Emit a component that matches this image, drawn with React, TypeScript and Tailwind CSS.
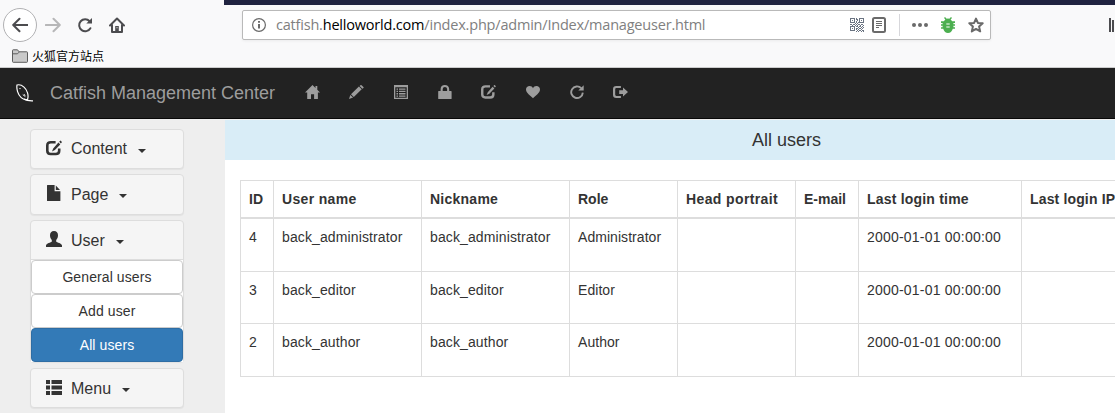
import React from "react";

type GlyphProps = { children: React.ReactNode; size?: string; box?: string };

function Glyph({ children, size = "size-[14px]", box = "0 0 14 14" }: GlyphProps) {
  return (
    <svg viewBox={box} className={`${size} shrink-0 fill-current`}>
      {children}
    </svg>
  );
}

const EditShape = () => (
  <g>
    <path d="M9.6 2.2H4.8Q1.3 2.2 1.3 5.4V10.8Q1.3 14 4.6 14H9.8Q13.2 14 13.2 10.8V8.4" fill="none" stroke="currentColor" strokeWidth="2.6" />
    <path d="M7.2 8.4L12.4 2.6L14.3 4.4L8.9 10L6 11.4ZM13.2 1.8L14.4 .5L16 2L14.9 3.4Z" />
  </g>
);

const navIcons: React.ReactNode[] = [
  <Glyph key="home" size="w-[15px] h-[14px]" box="0 0 15 14">
    <path d="M7.5 0 L10.5 3V1H12.3V4.8L15 7.6H12.9V14H9.1V9.2H6V14H2.2V7.6H0Z" />
  </Glyph>,
  <Glyph key="pencil" size="w-[15px] h-[14px]" box="0 0 15 14">
    <path d="M0 14 L1.3 9.9 L4.1 12.6ZM2 9.2 L9.9 1.6 L12.7 4.3 L4.8 11.9ZM10.6 .9 L11.4 .2 Q12 -.2 12.6 .3 L14.4 2 Q14.9 2.5 14.4 3 L13.4 3.8Z" />
  </Glyph>,
  <Glyph key="list">
    <path fillRule="evenodd" d="M0 0H14V14H0ZM1.3 2.3V12.7H12.7V2.3Z" />
    <path d="M2.5 3.5h1.5v1.3h-1.5zM5 3.5h6.5v1.3H5zM2.5 5.8h1.5v1.3h-1.5zM5 5.8h6.5v1.3H5zM2.5 8.1h1.5v1.3h-1.5zM5 8.1h6.5v1.3H5zM2.5 10.4h1.5v1.3h-1.5zM5 10.4h6.5v1.3H5z" />
  </Glyph>,
  <Glyph key="lock">
    <path fillRule="evenodd" d="M.6 6H2.6V4Q2.8 0 6.8 0T11.2 4V6H13Q13.6 6 13.6 6.6V13.4Q13.6 14 13 14H.8Q.2 14 .2 13.4V6.6Q.2 6 .6 6ZM4.7 6H9.1V4Q9 2.1 6.9 2.1T4.7 4Z" />
  </Glyph>,
  <Glyph key="edit" size="w-[15px] h-[14px]" box="0 .7 16 15">
    <EditShape />
  </Glyph>,
  <Glyph key="heart">
    <path d="M7 13.2C4.5 10.8 0 8 0 4.6C0 2.4 1.6 1 3.6 1C5.2 1 6.4 1.9 7 3.3C7.6 1.9 8.8 1 10.4 1C12.4 1 14 2.4 14 4.6C14 8 9.5 10.8 7 13.2Z" />
  </Glyph>,
  <Glyph key="refresh">
    <path d="M11.2 3.2A5.8 5.8 0 1 0 12.8 7.6" fill="none" stroke="currentColor" strokeWidth="1.9" />
    <path d="M13.7 .2V5.5H8.3Z" />
  </Glyph>,
  <Glyph key="logout" size="w-[15px] h-[14px]" box="0 0 15 14">
    <path d="M8.8 2H4.2Q2 2 2 4.2V9.8Q2 12 4.2 12H8.8" transform="translate(-.9 0)" fill="none" stroke="currentColor" strokeWidth="2.2" />
    <path d="M6.2 5.3H10V2.6L15 7.1L10 11.6V8.9H6.2Z" />
  </Glyph>,
];

const Caret = () => <span className="ml-[11px] mt-[3px] border-x-4 border-t-4 border-x-transparent border-t-[#333]" />;

function PanelHead({ icon, label }: { icon: React.ReactNode; label: string }) {
  return (
    <div className="flex h-full items-center pl-[15px] text-[16px] leading-[18px] text-[#333]">
      <span className="mb-[3px] mr-[9px] flex w-4 justify-center">{icon}</span>
      {label}
      <Caret />
    </div>
  );
}

const panelClass = "w-[154px] shrink-0 rounded-[4px] border border-[#ddd] bg-[#f5f5f5] shadow-[0_1px_1px_rgba(0,0,0,0.05)]";

function Sidebar() {
  return (
    <aside className="flex w-[225px] shrink-0 flex-col bg-[#eee] pl-[30px] pt-[10px]">
      <div className={`${panelClass} h-[40px]`}>
        <PanelHead
          label="Content"
          icon={<Glyph size="size-4" box="0 0 16 16"><EditShape /></Glyph>}
        />
      </div>
      <div className={`${panelClass} mt-[5px] h-[41px]`}>
        <PanelHead
          label="Page"
          icon={
            <Glyph size="size-4" box="0 0 16 16">
              <path d="M1.5 0H8.6V6.2H14.4V15.4Q14.4 16 13.8 16H1.5Q1 16 1 15.4V.6Q1 0 1.5 0ZM9.8 .6L14 5H9.8Z" />
            </Glyph>
          }
        />
      </div>
      <div className={`${panelClass} mt-[5px] flex h-[142px] flex-col`}>
        <div className="h-[39px] shrink-0 border-b border-[#ddd] pt-px">
          <PanelHead
            label="User"
            icon={
              <Glyph size="size-4" box="0 0 16 16">
                <path d="M8 0C10.6 0 12 1.7 12 4.3C12 6.4 11.3 8 10.2 9V10.5C10.8 11.6 16 12.3 16 14.6V16H0V14.6C0 12.3 5.2 11.6 5.8 10.5V9C4.7 8 4 6.4 4 4.3C4 1.7 5.4 0 8 0Z" />
              </Glyph>
            }
          />
        </div>
        <div className="flex flex-col bg-white text-center text-[14px] leading-[32px] tracking-[0.1px] text-[#333]">
          <button className="h-[34px] rounded-[4px] border border-[#ccc] bg-white">General users</button>
          <button className="h-[34px] rounded-[4px] border border-[#ccc] bg-white">Add user</button>
          <button className="h-[34px] rounded-[4px] border border-[#2e6da4] bg-[#337ab7] text-white">All users</button>
        </div>
      </div>
      <div className={`${panelClass} mt-[6px] h-[40px] pt-px`}>
        <PanelHead
          label="Menu"
          icon={
            <Glyph size="size-4" box="0 0 16 16">
              <path d="M0 1h4v4H0zM5.5 1H16v4H5.5zM0 6.5h4v4H0zM5.5 6.5H16v4H5.5zM0 12h4v4H0zM5.5 12H16v4H5.5z" />
            </Glyph>
          }
        />
      </div>
    </aside>
  );
}

const columns = [
  { heading: "ID", width: "w-[33px]", head: "", body: "" },
  { heading: "User name", width: "w-[148px]", head: "tracking-[0.33px]", body: "tracking-[0.12px]" },
  { heading: "Nickname", width: "w-[148px]", head: "tracking-[0.25px]", body: "tracking-[0.12px]" },
  { heading: "Role", width: "w-[108px]", head: "", body: "tracking-[0.05px]" },
  { heading: "Head portrait", width: "w-[118px]", head: "tracking-[0.38px]", body: "" },
  { heading: "E-mail", width: "w-[63px]", head: "", body: "" },
  { heading: "Last login time", width: "w-[163px]", head: "tracking-[0.2px]", body: "tracking-[0.21px]" },
  { heading: "Last login IP", width: "w-[120px]", head: "tracking-[0.15px]", body: "" },
];
const users = [
  { height: "h-[53px]", cells: ["4", "back_administrator", "back_administrator", "Administrator", "", "", "2000-01-01 00:00:00", ""] },
  { height: "h-[52px]", cells: ["3", "back_editor", "back_editor", "Editor", "", "", "2000-01-01 00:00:00", ""] },
  { height: "h-[53px]", cells: ["2", "back_author", "back_author", "Author", "", "", "2000-01-01 00:00:00", ""] },
];

function UserTable() {
  return (
    <table className="ml-[15px] mt-[20px] w-[901px] table-fixed border-separate border-spacing-0 text-left text-[14px] leading-[20px] text-[#333]">
      <colgroup>
        {columns.map((c) => (
          <col key={c.heading} className={c.width} />
        ))}
      </colgroup>
      <thead>
        <tr className="h-[39px]">
          {columns.map((c) => (
            <th key={c.heading} className={`whitespace-nowrap border-b-2 border-l border-t border-[#ddd] p-0 pl-2 font-bold ${c.head}`}>
              {c.heading}
            </th>
          ))}
        </tr>
      </thead>
      <tbody>
        {users.map((u) => (
          <tr key={u.cells[0]} className={u.height}>
            {u.cells.map((c, i) => (
              <td key={i} className={`whitespace-nowrap border-b border-l border-[#ddd] p-0 pl-2 pt-2 align-top ${columns[i].body}`}>
                {c}
              </td>
            ))}
          </tr>
        ))}
      </tbody>
    </table>
  );
}

const qrRows = [
  "11111010011111",
  "10001011010001",
  "10101001010101",
  "10001010010001",
  "11111010111111",
  "00000101000000",
  "11011010110110",
  "00100101001001",
  "11111011011010",
  "10001000100101",
  "10101011011010",
  "10001010100100",
  "11111001011011",
  "00000010100101",
];

function Browser() {
  return (
    <header className="flex h-[68px] flex-col border-b border-[#ccc] bg-[#f9f9fa]">
      <div className="ml-[224px] h-[5px] shrink-0 bg-[#202340]" />
      <div className="flex h-[40px] shrink-0 items-center pl-[3px] text-[#4c4c4f]">
        <span className="flex size-[34px] items-center justify-center rounded-full border border-[#b1b1b3] bg-white">
          <svg viewBox="0 0 16 16" className="size-4 fill-none stroke-current stroke-2">
            <path d="M15.5 8H1.5M7.5 1.7L1.2 8L7.5 14.3" strokeLinecap="round" strokeLinejoin="round" />
          </svg>
        </span>
        <svg viewBox="0 0 16 16" className="ml-[8px] size-4 fill-none stroke-[#b7b7b8] stroke-2">
          <path d="M.8 8H14.5M8.5 1.7L14.8 8L8.5 14.3" strokeLinecap="round" strokeLinejoin="round" />
        </svg>
        <svg viewBox="0 0 16 16" className="ml-[16px] size-4 fill-none stroke-current stroke-2">
          <path d="M12.6 4.2A6 6 0 1 0 13.4 11.2" strokeLinecap="round" />
          <path d="M15 1V6.5H9.3Z" className="fill-current stroke-none" />
        </svg>
        <svg viewBox="0 0 16 16" className="ml-[16px] size-4 fill-none stroke-current stroke-2">
          <path d="M1 8.5L8 1.5L15 8.5M3 8V15H13V8" strokeLinecap="round" strokeLinejoin="round" />
          <path d="M6.2 14.5V9H9.8V14.5Z" className="fill-current stroke-none" />
          <path d="M7.5 10.2h1v1h-1z" className="fill-white stroke-none" />
        </svg>
        <div className="ml-[117px] flex h-[30px] w-[749px] shrink-0 items-center rounded-[2px] border border-[#b9b9b9] bg-white pl-[9px] text-[#6a6a6a] shadow-[0_1px_3px_rgba(0,0,0,0.06)]">
          <svg viewBox="0 0 14 14" className="size-[14px] fill-none stroke-current">
            <circle cx="7" cy="7" r="6.4" strokeWidth="1.2" />
            <path d="M7 6V10.5M7 3V4.8" strokeWidth="2" />
          </svg>
          <span className="ml-[10px] w-[574px] whitespace-nowrap font-['Open_Sans',sans-serif] text-[14.5px] leading-[20px] tracking-[-0.2px] text-[#808080]">
            catfish.<span className="text-black">helloworld.com</span>/index.php/admin/Index/manageuser.html
          </span>
          <svg viewBox="0 0 14 14" shapeRendering="crispEdges" className="size-[14px] shrink-0 fill-[#6b7482]">
            {qrRows.flatMap((row, y) =>
              row.split("").map((v, x) => (v === "1" ? <rect key={`${x}-${y}`} x={x} y={y} width="1" height="1" /> : null)),
            )}
          </svg>
          <svg viewBox="0 0 14 16" className="ml-[8px] h-4 w-[14px] shrink-0 fill-none stroke-current">
            <rect x="1" y="1" width="12" height="14" rx="1.5" strokeWidth="2" />
            <path d="M4 4.5H10M4 6.5H10M4 8.5H10M4 10.5H7" />
          </svg>
          <span className="ml-[13px] h-[22px] w-px shrink-0 bg-[#d7d7db]" />
          <svg viewBox="0 0 16 4" className="ml-[12px] h-1 w-4 shrink-0 fill-current">
            <circle cx="2" cy="2" r="2" />
            <circle cx="8" cy="2" r="2" />
            <circle cx="14" cy="2" r="2" />
          </svg>
          <svg viewBox="0 0 14 16" className="ml-[13px] h-4 w-[14px] shrink-0 fill-[#4caf50]">
            <path d="M3 .9L4 0L5.7 1.7Q7 1.2 8.3 1.7L10 0L11 .9L9.6 2.4Q10.7 3.2 11.2 4.3H14V5.9H12.4V7.2H14V8.8H12.4V10.2H14V11.8H11.8Q10.5 16 7 16T2.2 11.8H0V10.2H1.6V8.8H0V7.2H1.6V5.9H0V4.3H2.8Q3.3 3.2 4.4 2.4Z" />
            <path d="M5.3 6.4H8.7V7.5H5.3ZM5.3 9.4H8.7V10.5H5.3Z" className="fill-white" />
          </svg>
          <svg viewBox="0 0 16 16" className="ml-[13px] size-4 shrink-0 fill-none stroke-current stroke-2">
            <path d="M8 1.6L9.9 5.9L14.7 6.3L11.1 9.6L12.2 14.4L8 11.9L3.8 14.4L4.9 9.6L1.3 6.3L6.1 5.9Z" strokeLinejoin="round" />
          </svg>
        </div>
        <svg viewBox="0 0 6 14" className="ml-[118px] h-[14px] w-[6px] shrink-0 fill-current">
          <path d="M0 0h2v14H0zM3 2h2v12H3z" />
        </svg>
      </div>
      <div className="flex h-[22px] items-center pl-[12px] font-['Noto_Sans_CJK_SC',sans-serif] text-[12px] leading-[16px] text-black">
        <svg viewBox="0 0 16 14" className="mb-px mr-[4px] h-[14px] w-4 fill-[#c9c9c9] stroke-[#5c5c5c]">
          <path d="M.5 12.5V1.5Q.5 .8 1.2 .8H5.5L7 2.8H14.8Q15.5 2.8 15.5 3.5V12.5Q15.5 13.3 14.8 13.3H1.2Q.5 13.3 .5 12.5Z" />
          <path d="M1 4.8H5.5L7 3.2" fill="none" />
        </svg>
        火狐官方站点
      </div>
    </header>
  );
}

export default function App() {
  return (
    <div className="flex h-[413px] w-[1115px] flex-col overflow-hidden bg-white font-['Liberation_Sans',Arial,sans-serif]">
      <Browser />
      <nav className="flex h-[51px] shrink-0 items-center border-b border-[#080808] bg-[#222] pl-[16px] text-[#9d9d9d]">
        <svg viewBox="0 0 18 18" className="h-[18px] w-[18px] fill-none stroke-white">
          <path d="M1 1C.3 5 1.8 10.5 5.2 13.6C7.2 15.4 9.6 15.8 11.6 15.3C12.8 11.5 11.5 6.2 8 3.1C6 1.3 3.2 .4 1 1Z" strokeWidth="1.2" />
          <path d="M8 15.2C10.5 16.8 14 17 17 16.9" strokeWidth="1.4" />
          <path d="M3.4 4.6h1.2M6.8 10.6L9.3 12.6M8 10.4L9.4 11.6" strokeWidth="1" />
        </svg>
        <span className="ml-[16px] w-[254.5px] whitespace-nowrap text-[18px] leading-[20px]">Catfish Management Center</span>
        <div className="flex items-center gap-[28px] pb-[2px]">
          {navIcons.map((icon, i) => (
            <span key={i} className="flex w-4 justify-center">
              {icon}
            </span>
          ))}
        </div>
      </nav>
      <div className="flex min-h-0 flex-1">
        <Sidebar />
        <main className="min-w-0 flex-1 overflow-hidden border-t border-[#eee]">
          <h1 className="h-[40px] bg-[#d9edf7] pl-[527px] text-[18px] leading-[40px] text-[#333]">All users</h1>
          <UserTable />
        </main>
      </div>
    </div>
  );
}
